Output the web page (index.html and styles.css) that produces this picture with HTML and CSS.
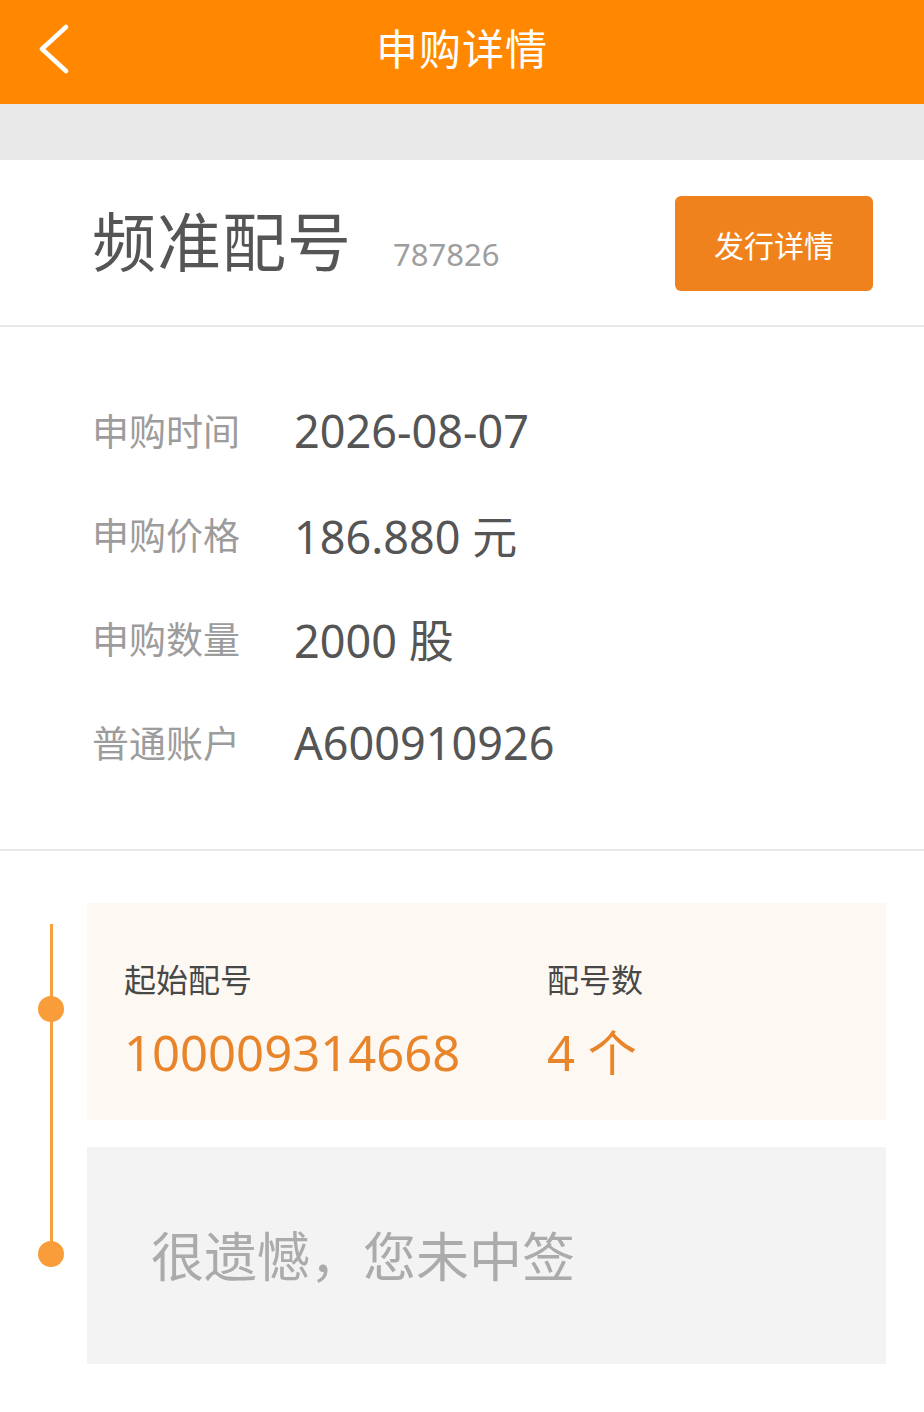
FILE: index.html
```html
<!DOCTYPE html>
<html lang="zh-CN">
<head>
<meta charset="utf-8">
<title>申购详情</title>
<link rel="stylesheet" href="styles.css">
</head>
<body>
<header class="topbar">
  <span class="back">
    <svg width="34" height="50" viewBox="0 0 34 50"><path d="M30 3 L6 25 L30 47" fill="none" stroke="#fff" stroke-width="4.5" stroke-linecap="round" stroke-linejoin="round"/></svg>
  </span>
  <h1 class="title">申购详情</h1>
</header>
<div class="band"></div>
<section class="stock">
  <div class="stock-name">
    <span class="name">频准配号</span>
    <span class="code">787826</span>
  </div>
  <button class="issue-btn">发行详情</button>
</section>
<section class="info">
  <div class="row"><span class="label">申购时间</span><span class="value">2026-08-07</span></div>
  <div class="row"><span class="label">申购价格</span><span class="value">186.880 元</span></div>
  <div class="row"><span class="label">申购数量</span><span class="value">2000 股</span></div>
  <div class="row"><span class="label">普通账户</span><span class="value">A600910926</span></div>
</section>
<section class="timeline">
  <div class="rail">
    <span class="line"></span>
    <span class="dot dot1"></span>
    <span class="dot dot2"></span>
  </div>
  <div class="cards">
    <div class="card match">
      <div class="col">
        <div class="k">起始配号</div>
        <div class="v">100009314668</div>
      </div>
      <div class="col col2">
        <div class="k">配号数</div>
        <div class="v">4 个</div>
      </div>
    </div>
    <div class="card result">很遗憾，您未中签</div>
  </div>
</section>
</body>
</html>
```
FILE: styles.css
```css
* { box-sizing: border-box; margin: 0; padding: 0; }
body {
  width: 924px;
  height: 1412px;
  background: #fff;
  font-family: "Noto Sans CJK SC", "Noto Sans", sans-serif;
  overflow: hidden;
}
.topbar {
  height: 104px;
  background: #FF8800;
  display: flex;
  align-items: center;
  justify-content: center;
  position: relative;
}
.back {
  position: absolute;
  left: 36px;
  top: 24px;
  width: 34px;
  height: 50px;
  display: block;
}
.title {
  color: #fff;
  font-size: 42px;
  font-weight: 400;
  line-height: 1;
  margin-top: -10px;
  letter-spacing: 1px;
}
.band {
  height: 56px;
  background: #E9E9E9;
}
.stock {
  height: 167px;
  display: flex;
  align-items: center;
  justify-content: space-between;
  padding: 0 51px 0 92px;
  border-bottom: 2px solid #E8E8E8;
}
.stock-name {
  display: flex;
  align-items: baseline;
  margin-top: -4px;
}
.name {
  font-size: 64px;
  color: #555;
  line-height: 1;
  letter-spacing: 1px;
}
.code {
  font-size: 31px;
  color: #9E9E9E;
  margin-left: 41px;
  font-family: "Noto Sans", sans-serif;
}
.issue-btn {
  width: 198px;
  height: 95px;
  background: #F0821E;
  border: none;
  border-radius: 6px;
  color: #fff;
  font-family: "Noto Sans CJK SC", sans-serif;
  font-size: 30px;
  margin-top: 2px;
}
.info {
  padding: 51px 0 55px 92px;
  border-bottom: 2px solid #E8E8E8;
}
.row {
  height: 104px;
  display: flex;
  align-items: center;
}
.label {
  width: 202px;
  font-size: 37px;
  color: #9C9C9C;
}
.value {
  font-size: 45px;
  color: #555;
  font-family: "Noto Sans", "Noto Sans CJK SC", sans-serif;
}
.timeline {
  display: flex;
  padding-top: 52px;
}
.rail {
  width: 87px;
  position: relative;
}
.line {
  position: absolute;
  left: 50px;
  top: 21px;
  width: 3px;
  height: 332px;
  background: #F7A040;
}
.dot {
  position: absolute;
  left: 38px;
  width: 26px;
  height: 26px;
  border-radius: 50%;
  background: #F99C3A;
}
.dot1 { top: 93px; }
.dot2 { top: 338px; }
.cards {
  width: 799px;
  display: flex;
  flex-direction: column;
  gap: 27px;
}
.card {
  height: 217px;
}
.match {
  background: #FDF8F2;
  display: flex;
  padding: 51px 0 0 37px;
}
.col { width: 423px; }
.col2 { width: auto; }
.k {
  font-size: 32px;
  color: #484848;
  line-height: 48px;
}
.v {
  margin-top: 22px;
  font-size: 49px;
  color: #E8852A;
  line-height: 56px;
  font-family: "Noto Sans", "Noto Sans CJK SC", sans-serif;
}
.result {
  background: #F3F3F3;
  display: flex;
  align-items: center;
  padding-left: 64px;
  padding-bottom: 4px;
  font-size: 53px;
  color: #ABABAB;
}
```
